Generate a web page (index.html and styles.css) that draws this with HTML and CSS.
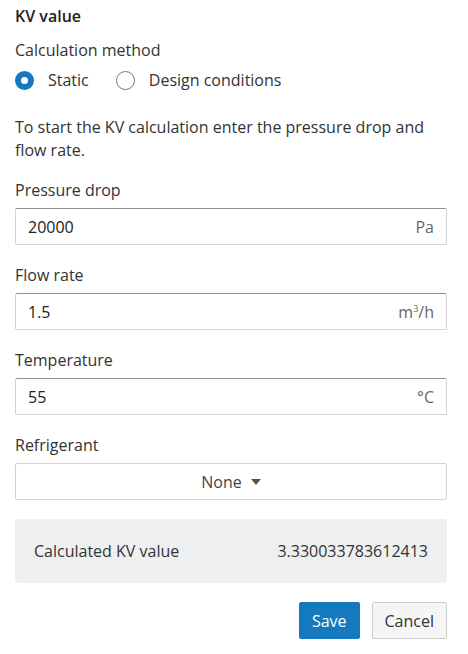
FILE: index.html
```html
<!DOCTYPE html>
<html lang="en">
<head>
    <meta charset="UTF-8">
    <meta name="viewport" content="width=device-width, initial-scale=1.0">
    <title>KV value</title>
    <link rel="stylesheet" href="styles.css">
</head>
<body>

    <div class="panel">
        <h2 class="title">KV value</h2>

        <div class="field-label">Calculation method</div>
        <div class="radios">
            <label class="radio">
                <span class="radio-dot checked"></span>
                <span>Static</span>
            </label>
            <label class="radio">
                <span class="radio-dot"></span>
                <span>Design conditions</span>
            </label>
        </div>

        <p class="hint">To start the KV calculation enter the pressure drop and flow rate.</p>

        <div class="field">
            <div class="field-label">Pressure drop</div>
            <div class="input-box">
                <span class="value">20000</span>
                <span class="unit">Pa</span>
            </div>
        </div>

        <div class="field">
            <div class="field-label">Flow rate</div>
            <div class="input-box">
                <span class="value">1.5</span>
                <span class="unit">m<sup>3</sup>/h</span>
            </div>
        </div>

        <div class="field">
            <div class="field-label">Temperature</div>
            <div class="input-box">
                <span class="value">55</span>
                <span class="unit">°C</span>
            </div>
        </div>

        <div class="field">
            <div class="field-label">Refrigerant</div>
            <div class="select-box">
                <span>None</span>
                <svg class="caret" width="10" height="6" viewBox="0 0 10 6"><path d="M0 0h10L5 6z" fill="#555"/></svg>
            </div>
        </div>

        <div class="result">
            <span>Calculated KV value</span>
            <span>3.330033783612413</span>
        </div>

        <div class="actions">
            <button class="btn btn-primary" type="button">Save</button>
            <button class="btn" type="button">Cancel</button>
        </div>
    </div>

</body>
</html>
```

FILE: styles.css
```css
body {
    margin: 0;
    padding: 0;
    background: #fff;
    color: #333;
    font-family: "Open Sans", "Noto Sans", sans-serif;
    font-size: 16px;
}
.panel {
    padding: 5px 21px 0 15px;
}
.title {
    font-size: 16px;
    font-weight: 600;
    margin: 0 0 12px;
    line-height: 22px;
    color: #222;
}
.field-label {
    line-height: 22px;
    margin-bottom: 7px;
}
.radios {
    display: flex;
    gap: 27px;
    height: 24px;
    align-items: center;
}
.radio {
    display: flex;
    align-items: center;
    gap: 14px;
}
.radio-dot {
    display: inline-block;
    width: 19px;
    height: 19px;
    border: 1px solid #777;
    border-radius: 50%;
    box-sizing: border-box;
}
.radio-dot.checked {
    border: 6px solid #1479bd;
    background: #fff;
}
.hint {
    margin: 24px 0 17px;
    line-height: 23px;
}
.field {
    margin-bottom: 19px;
}
.input-box {
    display: flex;
    justify-content: space-between;
    align-items: center;
    height: 37px;
    box-sizing: border-box;
    border: 1px solid #d3d3d3;
    border-top-color: #8f8f8f;
    border-radius: 2px;
    padding: 0 12px 0 12px;
}
.value {
    color: #222;
}
.unit {
    color: #666;
}
.unit sup {
    font-size: 9px;
    line-height: 0;
}
.select-box {
    display: flex;
    justify-content: center;
    align-items: center;
    gap: 9px;
    height: 37px;
    box-sizing: border-box;
    border: 1px solid #d3d3d3;
    border-radius: 2px;
    color: #444;
}
.result {
    display: flex;
    justify-content: space-between;
    align-items: center;
    height: 64px;
    padding: 0 19px;
    background: #eeeff1;
    border-radius: 3px;
}
.actions {
    display: flex;
    justify-content: flex-end;
    gap: 12px;
    margin-top: 19px;
}
.btn {
    font-family: inherit;
    font-size: 16px;
    height: 37px;
    padding: 0 12px;
    border: 1px solid #ccc;
    border-radius: 2px;
    background: #f5f5f6;
    color: #333;
}
.btn-primary {
    background: #1479bd;
    border-color: #1479bd;
    color: #fff;
}
```
